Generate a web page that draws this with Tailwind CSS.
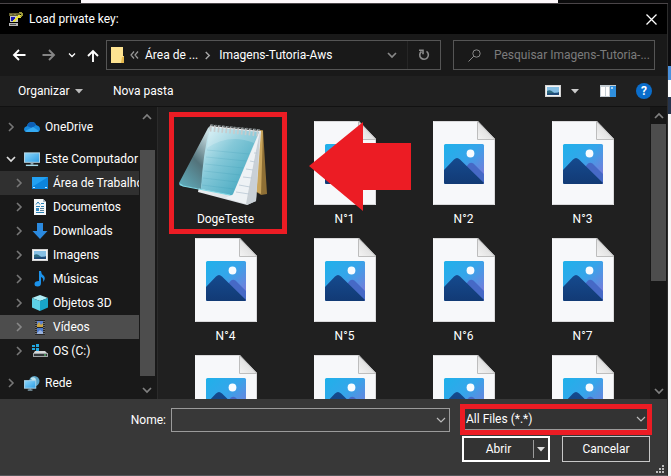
<!DOCTYPE html>
<html lang="pt-BR">
<head>
<meta charset="utf-8">
<title>Load private key:</title>
<script src="https://cdn.jsdelivr.net/npm/@tailwindcss/browser@4"></script>
</head>
<body class="h-screen overflow-hidden bg-[#0b0b0c] font-['Roboto','Noto_Sans',sans-serif] text-[12px] leading-4 text-white">
<svg class="absolute h-0 w-0" aria-hidden="true">
  <defs>
    <linearGradient id="sky" x1="0" y1="0" x2="1" y2="1"><stop offset="0" stop-color="#1fb1ea"/><stop offset=".45" stop-color="#35a5ea"/><stop offset="1" stop-color="#8a6fd6"/></linearGradient>
    <linearGradient id="hill" x1="0" y1="0" x2="0" y2="1"><stop offset="0" stop-color="#154a8e"/><stop offset="1" stop-color="#123a75"/></linearGradient>
    <linearGradient id="fold" x1="0" y1="1" x2="1" y2="0"><stop offset="0" stop-color="#f4f4f4"/><stop offset="1" stop-color="#cfcfcf"/></linearGradient>
    <linearGradient id="screen" x1="0" y1="0" x2="1" y2="1"><stop offset="0" stop-color="#8fd8fb"/><stop offset="1" stop-color="#2c9ce4"/></linearGradient>
    <linearGradient id="glass" x1="0" y1="0" x2="1" y2="1"><stop offset="0" stop-color="#e3f6fa"/><stop offset=".4" stop-color="#84c8d8"/><stop offset="1" stop-color="#2f9db8"/></linearGradient>
    <linearGradient id="flap" x1=".7" y1="0" x2=".2" y2="1"><stop offset="0" stop-color="#c9dfe4"/><stop offset=".5" stop-color="#53737b"/><stop offset="1" stop-color="#5fa9b8"/></linearGradient>
    <linearGradient id="paper" x1="0" y1="0" x2="1" y2="1"><stop offset="0" stop-color="#ffffff"/><stop offset="1" stop-color="#cfd6dc"/></linearGradient>
  </defs>
  <symbol id="picfile" viewBox="0 0 62 84">
    <path d="M0 0H45L62 18V84H0Z" fill="#f7f8fa"/>
    <path d="M.5 .5H45M.5 83.500H61.500V18" fill="none" stroke="#d9d9db"/>
    <path d="M44.500 .5V18.500H62Z" fill="url(#fold)" stroke="#bdbdbd"/>
    <rect x="11" y="23" width="40" height="40" rx="1.500" fill="url(#sky)"/>
    <path d="M29 51L36 42.500Q38 41 40.500 42.500L51 53V61.500Q51 63 49.500 63H40Z" fill="#4669c6"/>
    <path d="M11 49L21 38.500Q24 35.500 27 38.500L51 62Q50.500 63 49.500 63H12.500Q11 63 11 61.500Z" fill="url(#hill)"/>
    <circle cx="37.500" cy="32.500" r="3.900" fill="#f8fcff"/>
  </symbol>
  <symbol id="right" viewBox="0 0 8 10"><path d="M2 1L6 5L2 9" fill="none" stroke="currentColor" stroke-width="1.600"/></symbol>
  <symbol id="down" viewBox="0 0 10 8"><path d="M1 2L5 6L9 2" fill="none" stroke="currentColor" stroke-width="1.700"/></symbol>
  <symbol id="up" viewBox="0 0 10 8"><path d="M1 6L5 2L9 6" fill="none" stroke="currentColor" stroke-width="1.700"/></symbol>
  <symbol id="tri" viewBox="0 0 8 5"><path d="M0 0H8L4 4.500Z" fill="currentColor"/></symbol>
  <symbol id="photo" viewBox="0 0 16 14"><rect x=".5" y="1.500" width="15" height="11" fill="#f3f3f3" stroke="#d4d4d4"/><rect x="2" y="3" width="12" height="8" fill="#86bfe4"/><path d="M2 7Q5 5 8 8T14 8V11H2Z" fill="#2e6b80"/><path d="M2 9.500L14 8.500V11H2Z" fill="#1f4a78"/></symbol>
</svg>

<div class="flex h-full">
  <div class="flex min-w-0 flex-1 flex-col">
    <div class="h-1 shrink-0 border-b border-[#4a4548] pr-[110px] pl-[81px]"><div class="h-[3px] bg-[#fdf8fb]"></div></div>
    <main class="flex min-h-0 flex-1 flex-col border-r border-b border-[#55565a] border-r-[#2c2c2c]">

      <header class="flex h-[30px] shrink-0 items-center bg-black pr-[6px] pl-2">
        <svg class="h-4 w-4" viewBox="0 0 16 16" shape-rendering="crispEdges"><path d="M1 2H12V5H1Z" fill="#66632f"/><path d="M2 3H4V4H2ZM6 3H8V4H6Z" fill="#8f8c45"/><rect x="2" y="5" width="8" height="6" fill="#c8c8c8"/><rect x="3" y="6" width="4" height="4" fill="#1a1ab4"/><path d="M1 12H10V15H1Z" fill="#b4b4b4"/><path d="M2 13H8V14H2Z" fill="#555"/><path d="M4 10L9 5L10 4L13 4V7H10L6 11Z" fill="#e8e23c"/><path d="M11 1H14V2H15V5H14V6H12V5H13V3H12V2H11Z" fill="#9a9838"/></svg>
        <h1 class="ml-[5px] flex-1">Load private key:</h1>
        <button class="flex h-5 w-5 items-center justify-center" aria-label="Fechar"><svg class="h-[11px] w-[11px]" viewBox="0 0 11 11"><path d="M.5 .5L10.500 10.500M10.500 .5L.5 10.500" stroke="#fff" stroke-width="1.300"/></svg></button>
      </header>

      <nav class="flex h-[42px] shrink-0 items-center bg-[#191919] pr-3 pl-3">
        <button aria-label="Voltar"><svg class="h-3 w-[14px]" viewBox="0 0 14 12"><path d="M13.500 6H2M7 1L2 6L7 11" fill="none" stroke="#fff" stroke-width="1.900"/></svg></button>
        <button class="ml-4" aria-label="Avançar"><svg class="h-3 w-[14px]" viewBox="0 0 14 12"><path d="M.5 6H12M7 1L12 6L7 11" fill="none" stroke="#858585" stroke-width="1.900"/></svg></button>
        <button class="ml-3" aria-label="Locais recentes"><svg class="h-[6px] w-2"><use href="#down"/></svg></button>
        <button class="ml-[11px]" aria-label="Acima"><svg class="h-[13px] w-3" viewBox="0 0 12 13"><path d="M6 13V2M1 7L6 2L11 7" fill="none" stroke="#fff" stroke-width="1.900"/></svg></button>
        <div class="ml-[7px] flex h-[30px] min-w-0 flex-1 items-center border border-[#555] pl-1">
          <svg class="h-4 w-[14px] shrink-0" viewBox="0 0 14 16"><path d="M0 0H12V9H13V16H0Z" fill="#f8d775"/><path d="M0 0H12V10L10 16H0Z" fill="#fde391"/><path d="M11 10H13V16H10Z" fill="#e6b94e"/></svg>
          <svg class="ml-[5px] h-2 w-[9px] shrink-0 text-[#999]" viewBox="0 0 9 8"><path d="M4 .5L1 4L4 7.500M8 .5L5 4L8 7.500" fill="none" stroke="currentColor" stroke-width="1.200"/></svg>
          <a href="#" class="ml-[6px] min-w-[52px] whitespace-nowrap">Área de ...</a>
          <svg class="ml-[6px] h-[9px] w-[7px] shrink-0 text-[#aaa]"><use href="#right"/></svg>
          <a href="#" class="ml-2 flex-1 whitespace-nowrap">Imagens-Tutoria-Aws</a>
          <button class="px-[10px] text-[#888]" aria-label="Locais anteriores"><svg class="h-2 w-[10px]"><use href="#down"/></svg></button>
          <button class="flex h-full w-[33px] items-center justify-center border-l border-[#262626]" aria-label="Atualizar"><svg class="h-3 w-3" viewBox="0 0 12 12"><path d="M3.500 2.500A4.300 4.300 0 1 0 8.500 2.400" fill="none" stroke="#8c8c8c" stroke-width="1.600"/><path d="M1 1.200H5V5.300" fill="none" stroke="#8c8c8c" stroke-width="1.600"/></svg></button>
        </div>
        <label class="ml-3 flex h-[30px] w-[202px] shrink-0 items-center border border-[#555] pr-1 pl-[14px]">
          <svg class="h-[13px] w-[13px] shrink-0" viewBox="0 0 13 13"><circle cx="8.500" cy="4.500" r="3.700" fill="none" stroke="#8a8a8a"/><path d="M5.800 7.200L.5 12.500" stroke="#8a8a8a"/></svg>
          <input class="ml-[13px] w-full min-w-0 bg-transparent outline-none placeholder:text-[#7c7c7c]" aria-label="Pesquisar" placeholder="Pesquisar Imagens-Tutoria-...">
        </label>
      </nav>

      <div class="flex h-[31px] shrink-0 items-center border-b border-[#111] bg-[#202020] pr-[15px] pl-[18px]">
        <button class="flex min-w-[65px] items-center justify-between">Organizar<svg class="h-[5px] w-2 text-[#bbb]"><use href="#tri"/></svg></button>
        <button class="ml-[30px] flex-1 text-left">Nova pasta</button>
        <button class="flex items-center gap-[10px]" aria-label="Modo de exibição"><svg class="h-[14px] w-4"><use href="#photo"/></svg><svg class="h-[5px] w-2 text-[#ccc]"><use href="#tri"/></svg></button>
        <button class="ml-[21px]" aria-label="Painel de visualização"><svg class="h-3 w-4" viewBox="0 0 16 12"><rect width="16" height="12" fill="#c4cdd3"/><path d="M1 2H5V11H1ZM6 2H9V11H6Z" fill="#fff"/><path d="M10 1H16V12H10Z" fill="#2f8fdd"/><path d="M11 2H13V4H11Z" fill="#a9d4f5"/></svg></button>
        <button class="ml-5 flex h-4 w-4 items-center justify-center rounded-full bg-[#0a6dcb] font-bold" aria-label="Ajuda">?</button>
      </div>

      <div class="flex min-h-0 flex-1">
        <aside class="flex w-[158px] shrink-0 overflow-hidden border-r border-[#2b2b2b] bg-[#191919]">
          <ul class="min-w-0 flex-1 overflow-hidden pt-2 whitespace-nowrap">
            <li class="mb-2 flex h-6 items-center pl-[7px]"><svg class="h-[10px] w-2 shrink-0 text-[#777]"><use href="#right"/></svg>
              <svg class="ml-[9px] h-4 w-4 shrink-0" viewBox="0 0 16 16"><path d="M3 7Q4 3 8 3Q11 3 12 6Q16 7 16 10Q16 13 13 13H3Q0 13 0 10Q0 8 3 7Z" fill="#1789dc"/><path d="M3 7Q4 3 8 3Q11 3 12 6L8 9Z" fill="#0d5fb5"/><path d="M1 12L9 8L15 12Q14 13 13 13H3Q2 13 1 12Z" fill="#35aaf2"/></svg><a href="#" class="ml-[5px]">OneDrive</a></li>
            <li class="flex h-6 items-center pl-[6px]"><svg class="h-2 w-[10px] shrink-0 text-[#ddd]"><use href="#down"/></svg>
              <svg class="ml-2 h-4 w-4 shrink-0" viewBox="0 0 17 16"><rect x=".5" y="1.500" width="16" height="10" fill="url(#screen)" stroke="#b9d6e4"/><path d="M7 12H10V14H7Z" fill="#8ba3b0"/><path d="M2 14H15V15.500H2Z" fill="#a9dcec"/></svg><a href="#" class="ml-[5px]">Este Computador</a></li>
            <li class="flex h-6 items-center bg-[#303030] pl-[15px]"><svg class="h-[10px] w-2 shrink-0 text-[#777]"><use href="#right"/></svg>
              <svg class="ml-[9px] h-4 w-4 shrink-0" viewBox="0 0 16 16"><rect y="2" width="16" height="12" fill="#0c84dc"/><path d="M0 2H16L0 12Z" fill="#22a0f2"/><path d="M1 12.500H3M13 12.500H15" stroke="#bfe4ff"/></svg><a href="#" class="ml-[5px]">Área de Trabalho</a></li>
            <li class="flex h-6 items-center pl-[15px]"><svg class="h-[10px] w-2 shrink-0 text-[#777]"><use href="#right"/></svg>
              <svg class="ml-[9px] h-4 w-4 shrink-0" viewBox="0 0 16 16"><path d="M2 0H11L14 3V16H2Z" fill="#f5f7f8"/><path d="M11 0V3H14Z" fill="#a9b6bf"/><path d="M4 5.500L6 3L8 5.500M9 4.500H12M4 7.500H8M9 7.500H12M4 13.500H12" stroke="#287fb5" fill="none"/><path d="M4 9H7V12H4Z" fill="#2c8bc4"/><path d="M8 9.500H12M8 11.500H12" stroke="#57809a"/></svg><a href="#" class="ml-[5px]">Documentos</a></li>
            <li class="flex h-6 items-center pl-[15px]"><svg class="h-[10px] w-2 shrink-0 text-[#777]"><use href="#right"/></svg>
              <svg class="ml-[9px] h-4 w-4 shrink-0" viewBox="0 0 16 16"><path d="M5 0H11V8H15.500L8 16L.5 8H5Z" fill="#2b8ae0"/></svg><a href="#" class="ml-[5px]">Downloads</a></li>
            <li class="flex h-6 items-center pl-[15px]"><svg class="h-[10px] w-2 shrink-0 text-[#777]"><use href="#right"/></svg>
              <svg class="ml-[9px] h-[14px] w-4 shrink-0"><use href="#photo"/></svg><a href="#" class="ml-[5px]">Imagens</a></li>
            <li class="flex h-6 items-center pl-[15px]"><svg class="h-[10px] w-2 shrink-0 text-[#777]"><use href="#right"/></svg>
              <svg class="ml-[9px] h-4 w-4 shrink-0" viewBox="0 0 16 16"><path d="M7 0H9Q9 3 12 5Q14 8 11 11Q12 7 9 6V12Q9 15.500 5.500 15.500Q2.500 15.500 2.500 13Q2.500 10 7 10Z" fill="#1c92ea"/></svg><a href="#" class="ml-[5px]">Músicas</a></li>
            <li class="flex h-6 items-center pl-[15px]"><svg class="h-[10px] w-2 shrink-0 text-[#777]"><use href="#right"/></svg>
              <svg class="ml-[9px] h-4 w-4 shrink-0" viewBox="0 0 16 16"><path d="M8 0L16 3L8 6L0 3Z" fill="#b0eef7"/><path d="M0 3L8 6V16L0 12.500Z" fill="#5dd0e6"/><path d="M16 3L8 6V16L16 12.500Z" fill="#18a5c9"/></svg><a href="#" class="ml-[5px]">Objetos 3D</a></li>
            <li class="flex h-6 items-center bg-[#4d4d4d] pl-[15px]"><svg class="h-[10px] w-2 shrink-0 text-[#888]"><use href="#right"/></svg>
              <svg class="ml-[9px] h-4 w-4 shrink-0" viewBox="0 0 16 16"><rect x="3" y="1" width="10" height="15" fill="#262626"/><path d="M5 2H11V8H5Z" fill="#5b7fd0"/><path d="M5 9H11V15H5Z" fill="#4a78cc"/><path d="M5 6L7 3L9 6L11 4V8H5Z" fill="#c9a544"/><path d="M5 14L8 11L11 13V15H5Z" fill="#9bb3dd"/><path d="M4 2V15M12 2V15" stroke="#aaa" stroke-dasharray="1 1"/></svg><a href="#" class="ml-[5px]">Vídeos</a></li>
            <li class="mb-2 flex h-6 items-center pl-[15px]"><svg class="h-[10px] w-2 shrink-0 text-[#777]"><use href="#right"/></svg>
              <svg class="ml-[9px] h-4 w-4 shrink-0" viewBox="0 0 16 16"><path d="M0 2H3V4H0ZM4 1H7V4H4ZM0 5H3V7H0ZM4 5H7V8H4Z" fill="#21a7e0"/><path d="M3 8H13L16 11H1Z" fill="#d5d8d9"/><rect x="1" y="10" width="15" height="4" fill="#9fa4a6"/><path d="M2 11H15V13H2Z" fill="#33373a"/><path d="M12 12H14" stroke="#63e07c"/></svg><a href="#" class="ml-[5px]">OS (C:)</a></li>
            <li class="flex h-6 items-center pl-[7px]"><svg class="h-[10px] w-2 shrink-0 text-[#777]"><use href="#right"/></svg>
              <svg class="ml-[9px] h-4 w-4 shrink-0" viewBox="0 0 17 16"><circle cx="11" cy="6" r="5.500" fill="#5ba3c6"/><path d="M7 3Q10 1 12 3T10 7Z" fill="#c0e5ef"/><rect x=".5" y="5.500" width="12" height="8" fill="url(#screen)" stroke="#a9d3e8"/><path d="M4 15.500H9M6.500 14V15" stroke="#b2dcef"/></svg><a href="#" class="ml-[5px]">Rede</a></li>
          </ul>
          <div class="mr-[2px] flex w-4 shrink-0 flex-col items-center text-[#808080]">
            <svg class="my-[6px] h-2 w-[10px]"><use href="#up"/></svg>
            <div class="mt-[23px] w-[15px] flex-1 bg-[#4d4d4d]"></div>
            <svg class="mt-[10px] mb-[5px] h-2 w-[10px]"><use href="#down"/></svg>
          </div>
        </aside>

        <section class="grid min-w-0 flex-1 auto-rows-[117px] grid-cols-[repeat(auto-fill,119px)] overflow-hidden bg-[#202020] pt-[14px] pl-2 text-center">
          <figure class="relative flex flex-col items-center">
            <svg class="h-[84px] w-[90px] overflow-visible" viewBox="2 -2 90 84">
              <path d="M80 7H84L88 71L82 72L76 68Z" fill="#8e6f35"/><path d="M80 7L84 8L82 71L76 68Z" fill="#c9a55c"/>
              <path d="M31 3L82 8L77 78L68 82L19 69Z" fill="url(#paper)"/><path d="M81 9L77 78L68 82L66 79Z" fill="#c9d0d6"/><path d="M80 11L67 81L46 75L54 71Z" fill="#eef2f5"/>
              <path d="M75 30L78 30M71 38L76 39M67 46L74 47M64 54L73 55M60 62L71 64M57 69L70 71" stroke="#b7c6d3" stroke-width=".8"/>
              <path d="M31 3L29 5L0 60Q0 63 3 63L22 66Z" fill="url(#flap)"/>
              <path d="M31 4L80 9L54 71Q53 73 50 72L22 66Q24 30 31 4Z" fill="url(#glass)"/>
              <path d="M28 27L70 31M27 34L67 38M26 41L64 45M25 48L61 52M24 55L58 59M23 62L55 66" stroke="#2586a3" stroke-opacity=".18" stroke-width=".8"/>
              <path d="M31 4L80 9L75 20Q50 10 28 25Z" fill="#fff" fill-opacity=".2"/><path d="M1 61L4 63L51 72" fill="none" stroke="#81d8e5" stroke-width="1.200"/>
              <path d="M31 5L81 10" stroke="#c7cbcc" stroke-width="7" stroke-dasharray="1.700 2.200"/><path d="M32 2L82 7" stroke="#727a7c" stroke-width="1.300" stroke-dasharray="2.500 1.400"/>
            </svg>
            <figcaption class="mt-[6px]">DogeTeste</figcaption>
            <span class="absolute -top-[9px] left-[3px] h-[122px] w-[118px] border-5 border-[#ec1c24]"></span>
          </figure>
          <figure class="relative flex flex-col items-center"><svg class="h-[84px] w-[62px]"><use href="#picfile"/></svg><figcaption class="mt-[6px]">N°1</figcaption>
            <svg class="absolute top-0 left-6 h-[90px] w-[102px]" viewBox="0 0 102 90"><path d="M0 45L54 1V22H102V69H54V90Z" fill="#ec1c24"/></svg></figure>
          <figure class="flex flex-col items-center"><svg class="h-[84px] w-[62px]"><use href="#picfile"/></svg><figcaption class="mt-[6px]">N°2</figcaption></figure>
          <figure class="flex flex-col items-center"><svg class="h-[84px] w-[62px]"><use href="#picfile"/></svg><figcaption class="mt-[6px]">N°3</figcaption></figure>
          <figure class="flex flex-col items-center"><svg class="h-[84px] w-[62px]"><use href="#picfile"/></svg><figcaption class="mt-[6px]">N°4</figcaption></figure>
          <figure class="flex flex-col items-center"><svg class="h-[84px] w-[62px]"><use href="#picfile"/></svg><figcaption class="mt-[6px]">N°5</figcaption></figure>
          <figure class="flex flex-col items-center"><svg class="h-[84px] w-[62px]"><use href="#picfile"/></svg><figcaption class="mt-[6px]">N°6</figcaption></figure>
          <figure class="flex flex-col items-center"><svg class="h-[84px] w-[62px]"><use href="#picfile"/></svg><figcaption class="mt-[6px]">N°7</figcaption></figure>
          <figure class="flex flex-col items-center"><svg class="h-[84px] w-[62px]"><use href="#picfile"/></svg></figure>
          <figure class="flex flex-col items-center"><svg class="h-[84px] w-[62px]"><use href="#picfile"/></svg></figure>
          <figure class="flex flex-col items-center"><svg class="h-[84px] w-[62px]"><use href="#picfile"/></svg></figure>
          <figure class="flex flex-col items-center"><svg class="h-[84px] w-[62px]"><use href="#picfile"/></svg></figure>
        </section>
        <div class="flex w-[17px] shrink-0 flex-col items-center bg-[#171717] text-[#808080]">
          <svg class="mt-[5px] mb-1 h-2 w-[10px]"><use href="#up"/></svg>
          <div class="w-[15px] flex-1 bg-[#4d4d4d]"></div>
          <svg class="mt-[106px] mb-1 h-2 w-[10px]"><use href="#down"/></svg>
        </div>
      </div>

      <footer class="relative flex h-[76px] shrink-0 flex-col bg-[#383838] pt-[5px]">
        <div class="flex items-center pr-[15px]">
          <label for="nome" class="w-[171px] shrink-0 pr-[5px] text-right">Nome:</label>
          <div class="flex h-6 min-w-0 flex-1 items-center border border-[#9b9b9b] pr-[3px]">
            <input id="nome" class="h-full min-w-0 flex-1 bg-transparent px-1 outline-none">
            <svg class="h-2 w-[10px] text-[#bbb]" viewBox="0 0 10 8"><path d="M1 2L5 6L9 2" fill="none" stroke="currentColor" stroke-width="1.200"/></svg>
          </div>
          <div class="relative ml-[10px] w-[192px] shrink-0 border-5 border-[#ec1c24]">
            <select class="block h-[21px] w-full appearance-none border-b border-[#9b9b9b] bg-[#333] pl-[1px] leading-4" aria-label="Tipo de arquivo"><option>All Files (*.*)</option></select>
            <svg class="pointer-events-none absolute top-[6px] right-[1px] h-2 w-[10px] text-[#bbb]" viewBox="0 0 10 8"><path d="M1 2L5 6L9 2" fill="none" stroke="currentColor" stroke-width="1.200"/></svg>
          </div>
        </div>
        <div class="mt-[1px] flex justify-end gap-3 pr-[17px]">
          <div class="flex h-[26px] w-[88px] items-center border-2 border-white bg-[#333]">
            <button class="h-full flex-1">Abrir</button>
            <button class="flex h-[18px] w-[15px] items-center justify-center border-l border-[#9b9b9b]" aria-label="Mais opções"><svg class="h-[5px] w-2 text-[#ddd]"><use href="#tri"/></svg></button>
          </div>
          <button class="h-[26px] w-[88px] border border-[#c8c8c8] bg-[#333]">Cancelar</button>
        </div>
        <svg class="absolute right-[3px] bottom-[2px] h-2 w-2" viewBox="0 0 8 8"><path d="M6 0H8V2H6ZM6 3H8V5H6ZM6 6H8V8H6ZM3 3H5V5H3ZM3 6H5V8H3ZM0 6H2V8H0Z" fill="#bbb"/></svg>
      </footer>
    </main>
  </div>
  <div class="flex w-[3px] shrink-0 flex-col bg-[#0c0c0e]" aria-hidden="true">
    <div class="mt-[66px] h-[14px] bg-[#4a90dc]"></div>
    <div class="h-[17px] bg-white"></div>
    <div class="h-[17px] bg-[#26344c]"></div>
    <div class="flex-1 bg-[#f6f6f6]"></div>
  </div>
</div>
</body>
</html>
